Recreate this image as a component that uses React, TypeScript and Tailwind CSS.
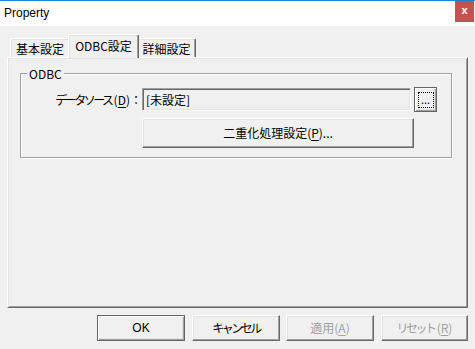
import { FunctionComponent, ReactNode } from 'react'

const jp = "font-['Noto_Sans_CJK_JP',sans-serif]"

const raised =
  'border border-t-white border-l-white border-r-[#696969] border-b-[#696969] shadow-[inset_-1px_-1px_0_#a0a0a0,inset_1px_1px_0_#e3e3e3]'
const defaultBtn = 'border border-[#646464] shadow-[inset_1px_1px_0_#fff,inset_-1px_-1px_0_#a0a0a0,inset_-2px_-2px_0_#e3e3e3]'

interface BtnProps {
  children: ReactNode
  className?: string
  isDefault?: boolean
  disabled?: boolean
}

const Btn: FunctionComponent<BtnProps> = ({ children, className, isDefault, disabled }) => (
  <div
    className={`flex items-center justify-center bg-[#f0f0f0] text-[12px] leading-none ${
      isDefault ? defaultBtn : raised
    } ${disabled ? 'text-[#a0a0a0]' : 'text-black'} ${className ?? ''}`}
  >
    {children}
  </div>
)

const Tab: FunctionComponent<{ label: ReactNode; selected?: boolean; className?: string }> = ({
  label,
  selected,
  className,
}) => (
  <div
    className={`flex justify-center rounded-t-[2px] border-t border-l border-white border-r border-r-[#696969] bg-[#f0f0f0] text-[12px] leading-none shadow-[inset_-1px_0_0_#a0a0a0,inset_1px_1px_0_#e3e3e3] ${
      selected ? 'relative z-10 h-[24px] -mb-[1px] pt-[5px]' : 'h-[19px] pt-[4px]'
    } ${className ?? ''}`}
  >
    {label}
  </div>
)

export default function App() {
  return (
    <div className={`flex h-[349px] w-[475px] flex-col overflow-hidden bg-[#f0f0f0] ${jp}`}>
      {/* title bar */}
      <div className="flex h-[26px] shrink-0 justify-between border-t border-[#1883d7] bg-white">
        <span className="pl-[4px] pt-[4px] font-['Liberation_Sans',sans-serif] text-[12px] leading-[16px] text-black">
          Property
        </span>
        <div className="mr-[1px] flex h-[21px] w-[19px] items-center justify-center bg-[#c75050] pb-[2px] font-['Liberation_Sans',sans-serif] text-[11px] font-bold leading-none text-white">
          x
        </div>
      </div>

      {/* tabs */}
      <div className="ml-[10px] mt-[8px] flex items-end">
        <Tab label="基本設定" className="w-[60px]" />
        <Tab label="ODBC設定" selected className="-mx-[2px] w-[71px]" />
        <Tab label="詳細設定" className="w-[59px]" />
      </div>

      {/* panel */}
      <div className="ml-[7px] h-[251px] w-[461px] border border-t-white border-l-white border-r-[#696969] border-b-[#696969] pl-[12px] pt-[15px] shadow-[inset_1px_1px_0_#e3e3e3,inset_-1px_-1px_0_#a0a0a0]">
        <div className="relative h-[85px] w-[432px] border border-[#a0a0a0] shadow-[1px_1px_0_#fff,inset_1px_1px_0_#fff]">
          <span className="absolute -top-[8px] left-[6px] bg-[#f0f0f0] px-[2px] text-[12px] leading-[15px] text-black">
            ODBC
          </span>
          <div className="mt-[13px] flex items-center">
            <div className="w-[118px] text-right text-[12px] leading-none text-black">
              <span className="tracking-[-2.5px]">データソース</span>
              <span className="ml-[2px]">
                (<u className="underline-offset-[2px]">D</u>)
              </span>
              <span className="-mr-[3px]">：</span>
            </div>
            <div className="ml-[3px] flex h-[23px] w-[269px] items-center border border-t-[#a0a0a0] border-l-[#a0a0a0] border-r-white border-b-white pl-[3px] text-[12px] leading-none text-black shadow-[inset_1px_1px_0_#696969,inset_-1px_-1px_0_#e3e3e3]">
              [未設定]
            </div>
            <Btn isDefault className="ml-[3px] h-[25px] w-[23px]">
              <div className="flex h-[16px] w-[16px] items-end justify-center border border-dotted border-black pb-[2px] text-[11px] leading-none">
                ...
              </div>
            </Btn>
          </div>
          <Btn className="ml-[121px] mt-[6px] h-[30px] w-[272px]">
            二重化処理設定(<u className="underline-offset-[2px]">P</u>)...
          </Btn>
        </div>
      </div>

      {/* buttons */}
      <div className="mt-[7px] flex">
        <Btn isDefault className="ml-[97px] h-[26px] w-[88px] font-['Liberation_Sans',sans-serif]">
          OK
        </Btn>
        <Btn className="ml-[7px] h-[26px] w-[88px]">
          <span className="tracking-[-2.5px]">キャンセル</span>
        </Btn>
        <Btn disabled className="ml-[6px] h-[26px] w-[88px]">
          適用(<u className="underline-offset-[2px]">A</u>)
        </Btn>
        <Btn disabled className="ml-[7px] h-[26px] w-[87px]">
          <span className="tracking-[-2.5px]">リセット</span>
          <span className="ml-[2px]">
            (<u className="underline-offset-[2px]">R</u>)
          </span>
        </Btn>
      </div>
    </div>
  )
}
